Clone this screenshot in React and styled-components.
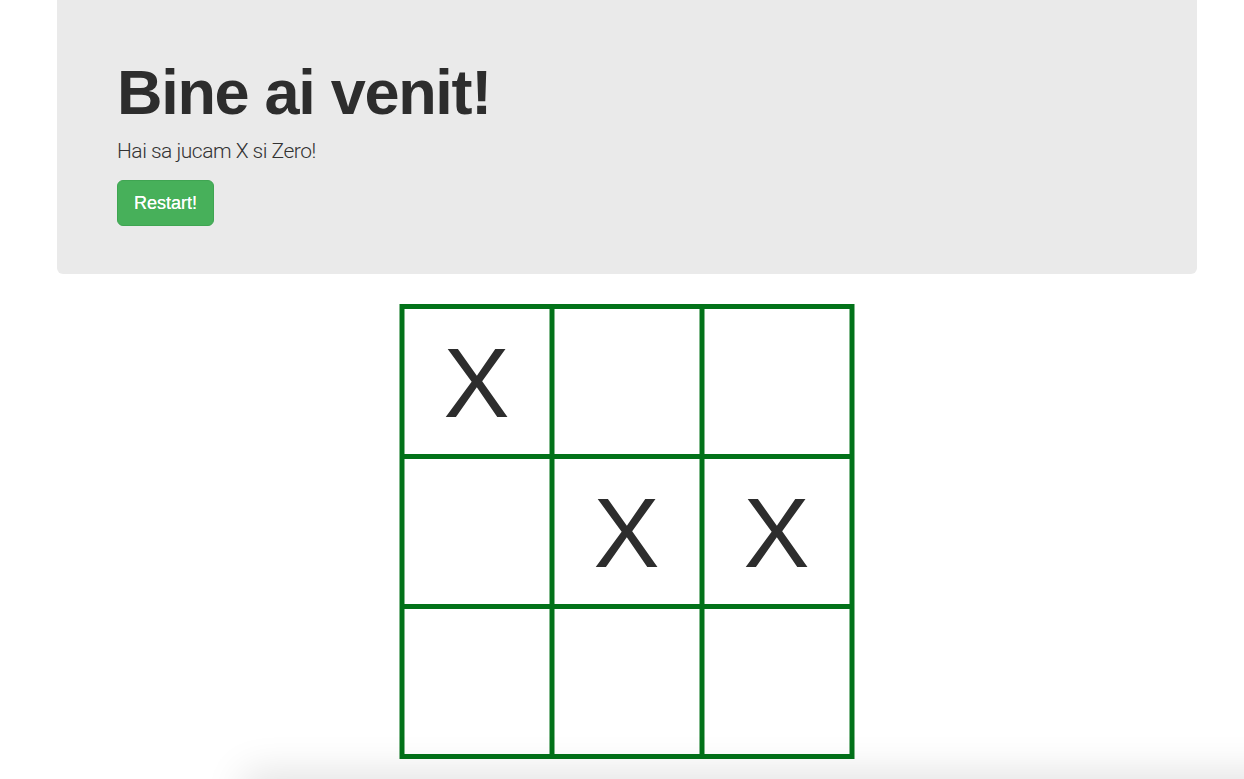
import React from "react";
import styled, { createGlobalStyle } from "styled-components";

const Global = createGlobalStyle`
  html, body { margin: 0; padding: 0; background: #fff; }
  body {
    font-family: "Liberation Sans", Arial, sans-serif;
    color: #2d2d2d;
    overflow: hidden;
  }
`;

const Page = styled.div`
  width: 1140px;
  margin: 0 0 0 57px;
  display: flex;
  flex-direction: column;
  align-items: center;
`;

const Jumbotron = styled.header`
  align-self: stretch;
  background: #eaeaea;
  border-radius: 0 0 6px 6px;
  padding: 58px 60px 48px;
  margin-bottom: 30px;
  display: flex;
  flex-direction: column;
  align-items: flex-start;
`;

const Title = styled.h1`
  margin: 0;
  font-size: 63px;
  line-height: 69px;
  font-weight: 700;
  color: #2d2d2d;
  letter-spacing: -1.3px;
`;

const Lead = styled.p`
  margin: 9px 0 14px;
  font-family: Roboto, "Liberation Sans", sans-serif;
  font-size: 21px;
  line-height: 30px;
  font-weight: 300;
  color: #333;
  letter-spacing: -0.5px;
`;

const Button = styled.button`
  font-family: "Liberation Sans", Arial, sans-serif;
  font-size: 18px;
  line-height: 24px;
  padding: 10px 16px;
  color: #fff;
  background: #47b05a;
  border: 1px solid #3fa552;
  border-radius: 6px;
  cursor: pointer;
  text-shadow: 0 0 0.4px #fff;
`;

const Board = styled.div`
  display: grid;
  grid-template-columns: repeat(3, 145px);
  grid-template-rows: repeat(3, 145px);
  gap: 5px;
  padding: 5px;
  background: #027219;
  transform: translateX(-0.5px);
`;

const Cell = styled.div`
  background: #fff;
  display: flex;
  align-items: center;
  justify-content: center;
  font-family: "Liberation Sans", Arial, sans-serif;
  font-size: 99px;
  line-height: 1;
  color: #2d2d2d;
  padding-top: 2px;
`;

const Shade = styled.div`
  position: fixed;
  left: 250px;
  right: -40px;
  top: 779px;
  height: 40px;
  box-shadow: 0 0 40px 6px rgba(0, 0, 0, 0.12);
  pointer-events: none;
`;

const cells = ["X", "", "", "", "X", "X", "", "", ""];

export default function App() {
  return (
    <>
      <Global />
      <Page>
        <Jumbotron>
          <Title>Bine ai venit!</Title>
          <Lead>Hai sa jucam X si Zero!</Lead>
          <Button>Restart!</Button>
        </Jumbotron>
        <Board>
          {cells.map((c, i) => (
            <Cell key={i}>{c}</Cell>
          ))}
        </Board>
      </Page>
      <Shade />
    </>
  );
}
